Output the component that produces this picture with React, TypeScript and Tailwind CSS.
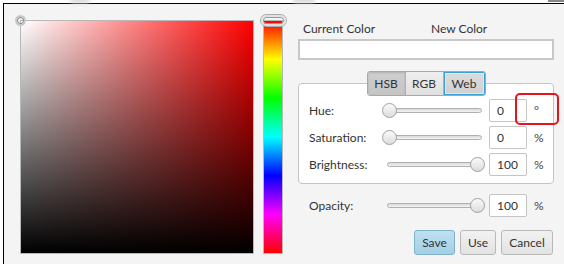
import React from "react";

function Slider({ pos }: { pos: "start" | "end" }) {
  return (
    <div className="relative h-[23px] w-[103px]">
      <div className="absolute left-[5px] right-[3px] top-[9px] h-[5px] rounded-full border border-[#b0b0b0] bg-[linear-gradient(to_bottom,#d8d8d8,#f4f4f4)]" />
      <div
        className={
          "absolute top-[4px] h-[15px] w-[15px] rounded-full border border-[#a0a0a0] bg-[linear-gradient(to_bottom,#fafafa,#dcdcdc)] " +
          (pos === "start" ? "left-0" : "right-0")
        }
      />
    </div>
  );
}

function Row({ label, value, unit, pos }: { label: string; value: string; unit: string; pos: "start" | "end" }) {
  return (
    <div className="flex items-center h-[23px]">
      <div className="w-[73px] text-[12px] text-[#333]">{label}</div>
      <Slider pos={pos} />
      <div className="ml-[4px] w-[38px] h-[23px] rounded-[2px] border border-[#c4c4c4] bg-white pl-[7px] text-[12px] leading-[21px] text-[#333]">
        {value}
      </div>
      <div className="ml-[7px] text-[12px] text-[#444]">{unit}</div>
    </div>
  );
}

export default function App() {
  return (
    <div className="relative w-[564px] h-[264px] overflow-hidden bg-white font-['Lato',sans-serif]">
      {/* background smudges outside the window */}
      <div className="absolute left-[70px] -top-[3px] h-[6px] w-[20px] rounded-full bg-[#d8d8d8] blur-[2px]" />
      <div className="absolute left-[293px] -top-[3px] h-[6px] w-[22px] rounded-full bg-[#d8d8d8] blur-[2px]" />
      <div className="absolute left-[548px] top-0 h-[2px] w-[16px] bg-[#888]" />
      <div className="ml-[3px] mt-[3px] h-[261px] border-l border-t border-black bg-[#f4f4f4] flex pl-[16px] pt-[16px]">
        {/* SB square */}
        <div className="relative w-[234px] h-[234px] border border-[#b8b8b8] bg-[linear-gradient(to_bottom,rgba(0,0,0,0),#000),linear-gradient(to_right,#fff,#f00)]">
          <div className="absolute -left-[6px] -top-[6px] w-[11px] h-[11px] rounded-full border-2 border-[#c8c8c8] shadow-[inset_0_0_0_1px_#888]" />
        </div>
        {/* Hue bar */}
        <div className="relative ml-[9px] w-[20px] h-[234px] border border-[#b8b8b8] bg-[linear-gradient(to_bottom,#f00,#ff0,#0f0,#0ff,#00f,#f0f,#f00)]">
          <div className="absolute -left-[3px] -top-[6px] w-[25px] h-[11px] rounded-full border-2 border-[#e0e0e0] shadow-[inset_0_0_0_1px_#999,0_0_0_1px_#aaa]" />
        </div>
        {/* Right panel */}
        <div className="ml-[15px] w-[256px] flex flex-col">
          <div className="flex h-[18px] items-center text-[12px] text-[#333]">
            <span className="w-[133px] pl-[5px]">Current Color</span>
            <span>New Color</span>
          </div>
          <div className="mt-[1px] h-[21px] border-2 border-[#c8c8c8] bg-white" />
          <div className="relative z-10 mt-[11px] flex justify-center">
            <div className="flex h-[25px] rounded-[3px] border border-[#a8a8a8] text-[12px] text-[#333]">
              <div className="flex w-[38px] items-center justify-center rounded-l-[2px] bg-[linear-gradient(to_bottom,#cfcfcf,#c4c4c4)] shadow-[inset_0_1px_2px_rgba(0,0,0,0.15)] border-r border-[#b0b0b0]">HSB</div>
              <div className="flex w-[38px] items-center justify-center bg-[linear-gradient(to_bottom,#eeeeee,#e0e0e0)] border-r border-[#b0b0b0]">RGB</div>
              <div className="flex w-[41px] items-center justify-center rounded-r-[2px] bg-[linear-gradient(to_bottom,#dcdcdc,#d0d0d0)] shadow-[inset_0_0_0_1px_#3aa0d8,inset_0_0_0_2px_#d6ecf7]">Web</div>
            </div>
          </div>
          <div className="-mt-[13px] h-[101px] rounded-[4px] border border-[#c4c4c4] bg-white pl-[10px] pt-[15px] flex flex-col gap-[4px]">
            <Row label="Hue:" value="0" unit="°" pos="start" />
            <Row label="Saturation:" value="0" unit="%" pos="start" />
            <Row label="Brightness:" value="100" unit="%" pos="end" />
          </div>
          <div className="mt-[10px] pl-[11px]">
            <Row label="Opacity:" value="100" unit="%" pos="end" />
          </div>
          <div className="mt-[13px] flex justify-end gap-[5px] pr-[1px] text-[12px] text-[#333]">
            <div className="flex h-[25px] w-[41px] items-center justify-center rounded-[3px] border border-[#7fb0cc] bg-[linear-gradient(to_bottom,#bfe0f1,#a3cfe6)]">Save</div>
            <div className="flex h-[25px] w-[36px] items-center justify-center rounded-[3px] border border-[#b8b8b8] bg-[linear-gradient(to_bottom,#f2f2f2,#e2e2e2)]">Use</div>
            <div className="flex h-[25px] w-[52px] items-center justify-center rounded-[3px] border border-[#b8b8b8] bg-[linear-gradient(to_bottom,#f2f2f2,#e2e2e2)]">Cancel</div>
          </div>
        </div>
      </div>
      {/* annotation */}
      <div className="absolute left-[515px] top-[93px] w-[44px] h-[32px] rounded-[5px] border-2 border-[#e8141c]" />
    </div>
  );
}
